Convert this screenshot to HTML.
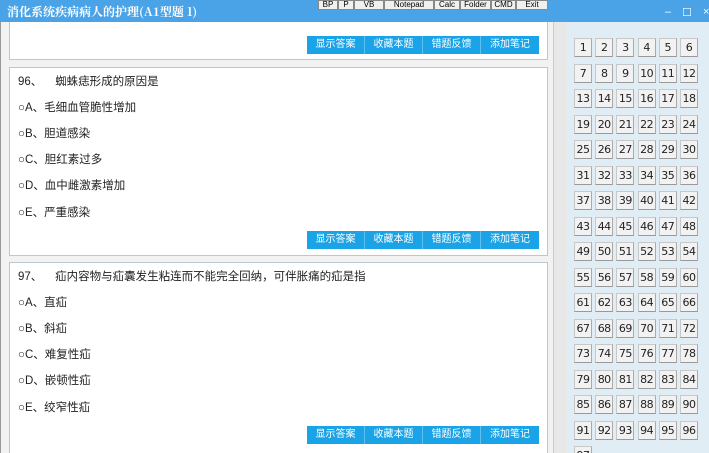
<!DOCTYPE html>
<html><head><meta charset="utf-8"><style>
*{margin:0;padding:0;box-sizing:border-box}
html,body{width:709px;height:453px;overflow:hidden}
body{background:#fff;font-family:"Liberation Sans","Noto Sans CJK SC",sans-serif;position:relative}
.title{position:absolute;left:0;top:0;width:709px;height:22px;background:#4aa3e6}
.title .t{position:absolute;left:7px;top:3px;color:#fff;font-size:12px;font-family:"Noto Serif CJK SC","Liberation Serif",serif;font-weight:bold}
.tb{position:absolute;top:0;height:10px;background:#f0f0f0;border:1px solid #888;font-size:8px;line-height:8px;text-align:center;color:#000}
.wc{position:absolute;top:6px;color:#fff;font-size:11px}
.left{position:absolute;left:0;top:22px;width:553px;height:431px;background:#f2f2f2;border-left:1px solid #999;overflow:hidden}
.card{position:absolute;left:8px;width:539px;background:#fff;border:1px solid #b8c8d4}
.btns{position:absolute;display:flex;height:18px;background:#1aa3e6}
.btns span{width:58px;color:#fff;font-size:10px;line-height:18px;text-align:center;border-right:1px solid #5ec0ee}
.btns span:last-child{border-right:none}
.txt{position:absolute;left:18px;font-size:11.5px;color:#222;white-space:nowrap}
.sb{position:absolute;left:553px;top:22px;width:14px;height:431px;background:#e8e8e8;border-left:1px solid #ccc}
.right{position:absolute;left:567px;top:22px;width:142px;height:431px;background:#e1edf5;overflow:hidden}
.nb{position:absolute;width:18px;height:19px;background:#f2f2f2;border:1px solid #c8c8c8;border-bottom-color:#999;border-right-color:#aaa;font-size:11px;text-align:center;line-height:18px;color:#222;font-family:"DejaVu Sans",sans-serif;letter-spacing:-0.5px}
</style></head><body>
<div class="title"><span class="t">消化系统疾病病人的护理(A1型题 1)</span>
<div class="tb" style="left:318px;width:20px">BP</div>
<div class="tb" style="left:338px;width:16px">P</div>
<div class="tb" style="left:354px;width:30px">VB</div>
<div class="tb" style="left:384px;width:50px">Notepad</div>
<div class="tb" style="left:434px;width:26px">Calc</div>
<div class="tb" style="left:460px;width:31px">Folder</div>
<div class="tb" style="left:491px;width:25px">CMD</div>
<div class="tb" style="left:516px;width:32px">Exit</div>
<span class="wc" style="left:665px">–</span><span class="wc" style="left:682px">☐</span><span class="wc" style="left:703px">×</span>
</div>
<div class="left">
<div class="card" style="top:-2px;height:40px"></div>
<div class="card" style="top:45px;height:189px"></div>
<div class="card" style="top:240px;height:200px"></div>
</div>
<div class="btns" style="left:307px;top:36px"><span>显示答案</span><span>收藏本题</span><span>错题反馈</span><span>添加笔记</span></div>
<div class="txt" style="top:73px">96、&nbsp;&nbsp;&nbsp;&nbsp;蜘蛛痣形成的原因是</div>
<div class="txt" style="top:99px">○A、毛细血管脆性增加</div>
<div class="txt" style="top:125px">○B、胆道感染</div>
<div class="txt" style="top:151px">○C、胆红素过多</div>
<div class="txt" style="top:177px">○D、血中雌激素增加</div>
<div class="txt" style="top:204px">○E、严重感染</div>
<div class="btns" style="left:307px;top:231px"><span>显示答案</span><span>收藏本题</span><span>错题反馈</span><span>添加笔记</span></div>
<div class="txt" style="top:268px">97、&nbsp;&nbsp;&nbsp;&nbsp;疝内容物与疝囊发生粘连而不能完全回纳，可伴胀痛的疝是指</div>
<div class="txt" style="top:294px">○A、直疝</div>
<div class="txt" style="top:320px">○B、斜疝</div>
<div class="txt" style="top:346px">○C、难复性疝</div>
<div class="txt" style="top:372px">○D、嵌顿性疝</div>
<div class="txt" style="top:399px">○E、绞窄性疝</div>
<div class="btns" style="left:307px;top:426px"><span>显示答案</span><span>收藏本题</span><span>错题反馈</span><span>添加笔记</span></div>
<div class="sb"></div>
<div class="right" id="g"></div>
<script>
var h='';for(var i=0;i<97;i++){var r=Math.floor(i/6),c=i%6;h+='<div class="nb" style="left:'+(7+c*21.2)+'px;top:'+(16+r*25.5)+'px">'+(i+1)+'</div>';}
document.getElementById('g').innerHTML=h;
</script>
</body></html>
